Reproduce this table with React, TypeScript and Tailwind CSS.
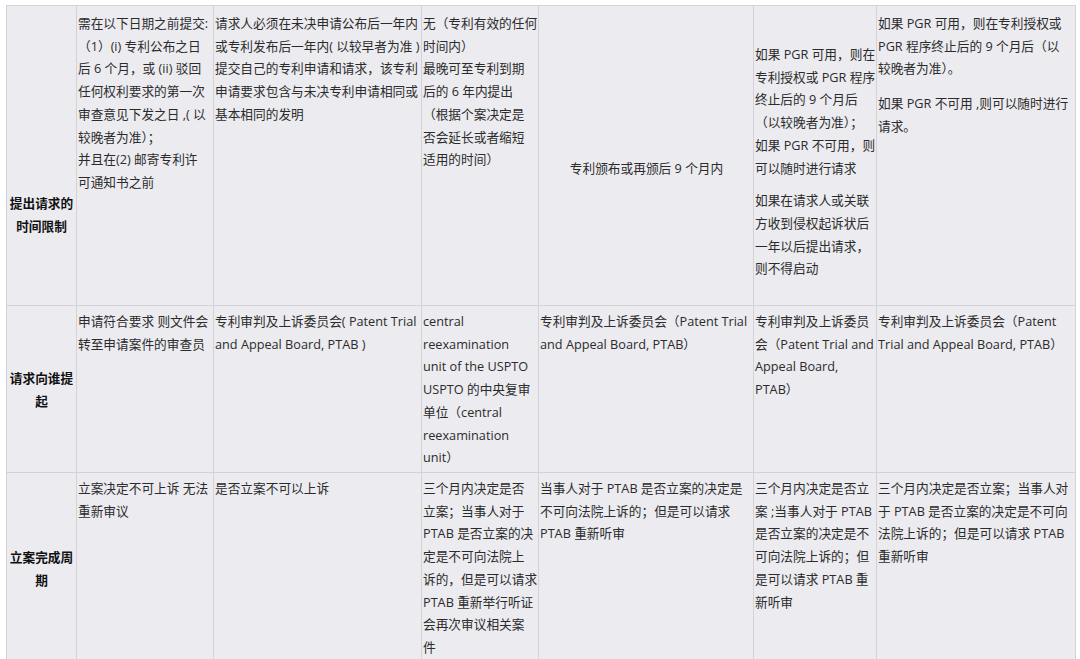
import React from 'react';

type Cell = {
  paras: string[][];
  pad: string;
  gap?: string;
  center?: boolean;
};

type Row = {
  title: string[];
  titlePad: string;
  cells: Cell[];
};

const rows: Row[] = [
  {
    title: ['提出请求的', '时间限制'],
    titlePad: 'pt-[186px]',
    cells: [
      {
        pad: 'pt-[6px]',
        paras: [
          [
            '需在以下日期之前提交:',
            '（1）(i) 专利公布之日',
            '后 6 个月，或 (ii) 驳回',
            '任何权利要求的第一次',
            '审查意见下发之日 ,( 以',
            '较晚者为准）；',
            '并且在(2) 邮寄专利许',
            '可通知书之前',
          ],
        ],
      },
      {
        pad: 'pt-[6px]',
        paras: [
          [
            '请求人必须在未决申请公布后一年内',
            '或专利发布后一年内( 以较早者为准 )',
            '提交自己的专利申请和请求，该专利',
            '申请要求包含与未决专利申请相同或',
            '基本相同的发明',
          ],
        ],
      },
      {
        pad: 'pt-[6px]',
        paras: [
          [
            '无（专利有效的任何',
            '时间内）',
            '最晚可至专利到期',
            '后的 6 年内提出',
            '（根据个案决定是',
            '否会延长或者缩短',
            '适用的时间）',
          ],
        ],
      },
      {
        pad: 'pt-[151px]',
        center: true,
        paras: [['专利颁布或再颁后 9 个月内']],
      },
      {
        pad: 'pt-[37px]',
        gap: 'mt-[10px]',
        paras: [
          [
            '如果 PGR 可用，则在',
            '专利授权或 PGR 程序',
            '终止后的 9 个月后',
            '（以较晚者为准）；',
            '如果 PGR 不可用，则',
            '可以随时进行请求',
          ],
          ['如果在请求人或关联', '方收到侵权起诉状后', '一年以后提出请求，', '则不得启动'],
        ],
      },
      {
        pad: 'pt-[6px]',
        gap: 'mt-[12px]',
        paras: [
          ['如果 PGR 可用，则在专利授权或', 'PGR 程序终止后的 9 个月后（以', '较晚者为准）。'],
          ['如果 PGR 不可用 ,则可以随时进行', '请求。'],
        ],
      },
    ],
  },
  {
    title: ['请求向谁提', '起'],
    titlePad: 'pt-[61px]',
    cells: [
      { pad: 'pt-[4px]', paras: [['申请符合要求 则文件会', '转至申请案件的审查员']] },
      { pad: 'pt-[4px]', paras: [['专利审判及上诉委员会( Patent Trial', 'and Appeal Board, PTAB )']] },
      {
        pad: 'pt-[4px]',
        paras: [
          [
            'central',
            'reexamination',
            'unit of the USPTO',
            'USPTO 的中央复审',
            '单位（central',
            'reexamination',
            'unit）',
          ],
        ],
      },
      { pad: 'pt-[4px]', paras: [['专利审判及上诉委员会（Patent Trial', 'and Appeal Board, PTAB）']] },
      { pad: 'pt-[4px]', paras: [['专利审判及上诉委员', '会（Patent Trial and', 'Appeal Board,', 'PTAB）']] },
      { pad: 'pt-[4px]', paras: [['专利审判及上诉委员会（Patent', 'Trial and Appeal Board, PTAB）']] },
    ],
  },
  {
    title: ['立案完成周', '期'],
    titlePad: 'pt-[73px]',
    cells: [
      { pad: 'pt-[4px]', paras: [['立案决定不可上诉 无法', '重新审议']] },
      { pad: 'pt-[4px]', paras: [['是否立案不可以上诉']] },
      {
        pad: 'pt-[4px]',
        paras: [
          [
            '三个月内决定是否',
            '立案；当事人对于',
            'PTAB 是否立案的决',
            '定是不可向法院上',
            '诉的，但是可以请求',
            'PTAB 重新举行听证',
            '会再次审议相关案',
            '件',
          ],
        ],
      },
      {
        pad: 'pt-[4px]',
        paras: [['当事人对于 PTAB 是否立案的决定是', '不可向法院上诉的；但是可以请求', 'PTAB 重新听审']],
      },
      {
        pad: 'pt-[4px]',
        paras: [
          [
            '三个月内决定是否立',
            '案 ;当事人对于 PTAB',
            '是否立案的决定是不',
            '可向法院上诉的；但',
            '是可以请求 PTAB 重',
            '新听审',
          ],
        ],
      },
      {
        pad: 'pt-[4px]',
        paras: [
          ['三个月内决定是否立案；当事人对', '于 PTAB 是否立案的决定是不可向', '法院上诉的；但是可以请求 PTAB', '重新听审'],
        ],
      },
    ],
  },
];

const cellBase = 'border-r border-b border-[#d2d2d8] bg-[#ebebf0]';

const App: React.FC = () => {
  return (
    <div className="min-h-screen bg-white pl-[6px] pt-[5px] overflow-hidden font-['Open_Sans','Noto_Sans_CJK_SC',sans-serif] text-[12.7px] leading-[22.7px] text-[#2b2b2b]">
      <div className="grid w-max grid-cols-[70px_137px_208px_117px_215px_123px_199px] grid-rows-[300px_167px_192px] border-l border-t border-[#d2d2d8]">
        {rows.map((row, ri) => (
          <React.Fragment key={ri}>
            <div className={`${cellBase} ${row.titlePad} text-center font-bold text-[#111]`}>
              {row.title.map((t) => (
                <div key={t}>{t}</div>
              ))}
            </div>
            {row.cells.map((cell, ci) => (
              <div key={ci} className={`${cellBase} ${cell.pad} pl-[1px] ${cell.center ? 'text-center' : ''}`}>
                {cell.paras.map((p, pi) => (
                  <div key={pi} className={pi > 0 ? cell.gap : ''}>
                    {p.map((line, li) => (
                      <div key={li} className="whitespace-nowrap">
                        {line}
                      </div>
                    ))}
                  </div>
                ))}
              </div>
            ))}
          </React.Fragment>
        ))}
      </div>
    </div>
  );
};

export default App;
